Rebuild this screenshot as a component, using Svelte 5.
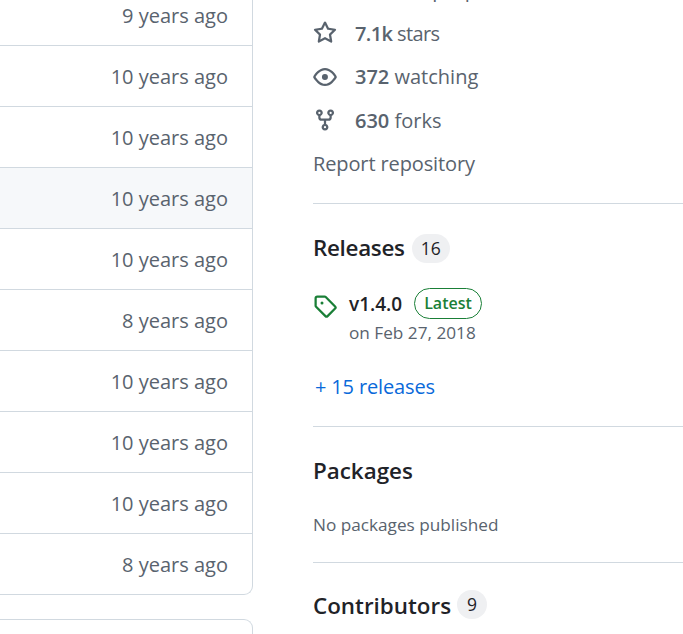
<script>
  const rows = ['9 years ago','10 years ago','10 years ago','10 years ago','10 years ago','8 years ago','10 years ago','10 years ago','10 years ago','8 years ago'];
</script>

<div class="page">
  <main class="left">
    <div class="box">
      {#each rows as r, i}
        <div class="row" class:hover={i === 3}>{r}</div>
      {/each}
    </div>
    <div class="box2"></div>
  </main>
  <aside class="side">
    <ul class="about">
      <li class="clip"><span class="ic"></span><span>Custom properties</span></li>
      <li class="stars">
        <svg class="ic" viewBox="0 0 16 16" width="24" height="24"><path d="M8 .25a.75.75 0 0 1 .673.418l1.882 3.815 4.21.612a.75.75 0 0 1 .416 1.279l-3.046 2.97.719 4.192a.751.751 0 0 1-1.088.791L8 12.347l-3.766 1.98a.75.75 0 0 1-1.088-.79l.72-4.194L.818 6.374a.75.75 0 0 1 .416-1.28l4.21-.611L7.327.668A.75.75 0 0 1 8 .25Zm0 2.445L6.615 5.5a.75.75 0 0 1-.564.41l-3.097.45 2.24 2.184a.75.75 0 0 1 .216.664l-.528 3.084 2.769-1.456a.75.75 0 0 1 .698 0l2.77 1.456-.53-3.084a.75.75 0 0 1 .216-.664l2.24-2.183-3.096-.45a.75.75 0 0 1-.564-.41L8 2.694Z"/></svg>
        <span><b>7.1k</b> stars</span>
      </li>
      <li>
        <svg class="ic" viewBox="0 0 16 16" width="24" height="24"><path d="M8 2c1.981 0 3.671.992 4.933 2.078 1.27 1.091 2.187 2.345 2.637 3.023a1.62 1.62 0 0 1 0 1.798c-.45.678-1.367 1.932-2.637 3.023C11.67 13.008 9.981 14 8 14c-1.981 0-3.671-.992-4.933-2.078C1.797 10.83.88 9.576.43 8.898a1.62 1.62 0 0 1 0-1.798c.45-.677 1.367-1.931 2.637-3.022C4.33 2.992 6.019 2 8 2ZM1.679 7.932a.12.12 0 0 0 0 .136c.411.622 1.241 1.75 2.366 2.717C5.176 11.758 6.527 12.5 8 12.5c1.473 0 2.825-.742 3.955-1.715 1.124-.967 1.954-2.096 2.366-2.717a.12.12 0 0 0 0-.136c-.412-.621-1.242-1.75-2.366-2.717C10.824 4.242 9.473 3.5 8 3.5c-1.473 0-2.825.742-3.955 1.715-1.124.967-1.954 2.096-2.366 2.717ZM8 10a2 2 0 1 1-.001-3.999A2 2 0 0 1 8 10Z"/></svg>
        <span><b>372</b> watching</span>
      </li>
      <li>
        <svg class="ic" viewBox="0 0 16 16" width="24" height="24"><path d="M5 5.372v.878c0 .414.336.75.75.75h4.5a.75.75 0 0 0 .75-.75v-.878a2.25 2.25 0 1 1 1.5 0v.878a2.25 2.25 0 0 1-2.25 2.25h-1.5v2.128a2.251 2.251 0 1 1-1.5 0V8.5h-1.5A2.25 2.25 0 0 1 3.5 6.25v-.878a2.25 2.25 0 1 1 1.5 0ZM5 3.25a.75.75 0 1 0-1.5 0 .75.75 0 0 0 1.5 0Zm6.75.75a.75.75 0 1 0 0-1.5.75.75 0 0 0 0 1.5Zm-3 8.75a.75.75 0 1 0-1.5 0 .75.75 0 0 0 1.5 0Z"/></svg>
        <span><b>630</b> forks</span>
      </li>
    </ul>
    <div class="report">Report repository</div>
    <hr class="hr1" />
    <section class="releases">
      <h2>Releases <span class="counter">16</span></h2>
      <div class="release">
        <svg class="tag" viewBox="0 0 16 16" width="24" height="24"><path d="M1 7.775V2.75C1 1.784 1.784 1 2.75 1h5.025c.464 0 .91.184 1.238.513l6.25 6.25a1.75 1.75 0 0 1 0 2.474l-5.026 5.026a1.75 1.75 0 0 1-2.474 0l-6.25-6.25A1.752 1.752 0 0 1 1 7.775Zm1.5 0c0 .066.026.13.073.177l6.25 6.25a.25.25 0 0 0 .354 0l5.025-5.025a.25.25 0 0 0 0-.354l-6.25-6.25a.25.25 0 0 0-.177-.073H2.75a.25.25 0 0 0-.25.25ZM6 5a1 1 0 1 1 0 2 1 1 0 0 1 0-2Z"/></svg>
        <div class="rel-text">
          <div class="rel-title"><span class="ver">v1.4.0</span><span class="latest">Latest</span></div>
          <div class="date">on Feb 27, 2018</div>
        </div>
      </div>
      <div class="more">+ 15 releases</div>
    </section>
    <hr class="hr2" />
    <section class="packages">
      <h2>Packages</h2>
      <div class="nopk">No packages published</div>
    </section>
    <hr class="hr3" />
    <h2 class="contrib">Contributors <span class="counter">9</span></h2>
  </aside>
</div>

<style>
  :global(html), :global(body) { margin: 0; background: #fff; overflow: hidden; }
  .page {
    width: 683px; height: 634px; overflow: hidden;
    display: flex; align-items: flex-start;
    font-family: "Open Sans", "Noto Sans", sans-serif;
    font-size: 20px; color: #59636e; background: #fff;
  }
  .left { width: 253px; flex: none; }
  .box {
    box-sizing: border-box; height: 595px;
    border: 1px solid #d1d9e0; border-left: none; border-top: none;
    border-bottom-right-radius: 9px;
    overflow: hidden;
  }
  .row {
    box-sizing: border-box; height: 61px; padding-right: 24px;
    display: flex; align-items: center; justify-content: flex-end;
    border-bottom: 1px solid #d1d9e0;
  }
  .row:first-child { height: 46px; align-items: flex-start; padding-top: 2px; }
  .row:last-child { border-bottom: none; height: 61px; }
  .row.hover { background: #f6f8fa; }
  .box2 {
    box-sizing: border-box; height: 40px; margin-top: 24px;
    border: 1px solid #d1d9e0; border-left: none; border-bottom: none;
    border-top-right-radius: 9px;
  }
  .side { margin-left: 60px; flex: 1; min-width: 0; margin-top: -32px; }
  .about { list-style: none; margin: 0; padding: 0; }
  .about li { display: flex; align-items: center; gap: 18px; height: 43.5px; white-space: nowrap; }
  .about li.stars { letter-spacing: -0.6px; }
  .ic { width: 24px; height: 24px; flex: none; fill: #59636e; }
  b { font-weight: 600; }
  .report { line-height: 43px; height: 43px; white-space: nowrap; letter-spacing: -0.12px; }
  hr { border: none; height: 1px; background: #d1d9e0; margin: 0; }
  .hr1 { margin-top: 18px; }
  h2 { margin: 0; font-size: 22.4px; font-weight: 600; color: #1f2328; display: flex; align-items: center; gap: 6px; white-space: nowrap; }
  .counter {
    display: inline-flex; align-items: center; justify-content: center;
    height: 29px; padding: 0 9px; border-radius: 15px; letter-spacing: 0;
    background: #eff0f2; font-size: 17.5px; font-weight: 400; color: #1f2328;
  }
  .releases { padding-top: 28px; }
  .releases h2 { height: 30px; letter-spacing: -0.3px; gap: 7px; }
  .releases .counter { margin-top: 2px; }
  .release { display: flex; gap: 12px; margin-top: 27px; }
  .tag { fill: #1a7f37; flex: none; margin-top: 5px; }
  .rel-title { display: flex; align-items: center; gap: 12px; height: 30px; }
  .ver { font-weight: 600; font-size: 19px; color: #1f2328; }
  .latest {
    box-sizing: border-box; height: 31px; margin-bottom: 2px; padding: 0 9px; border: 1.5px solid #1a7f37; border-radius: 16px;
    display: flex; align-items: center; font-size: 16px; font-weight: 600; color: #1a7f37;
  }
  .date { font-size: 17.2px; line-height: 24px; margin-top: 2px; }
  .more { color: #0969da; margin-top: 28px; line-height: 28px; padding-left: 2px; letter-spacing: -0.15px; }
  .hr2 { margin-top: 25px; }
  .packages { padding-top: 27px; }
  .packages h2 { height: 32px; }
  .nopk { font-size: 17.2px; margin-top: 27px; line-height: 24px; }
  .hr3 { margin-top: 25px; }
  .contrib { margin-top: 26px; height: 32px; }
  .contrib .counter { margin-bottom: 2px; padding: 0 10px; }
</style>
